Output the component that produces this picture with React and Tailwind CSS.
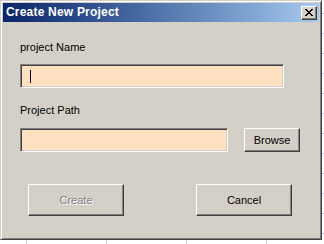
import React from 'react';

// classic 3D edges
const raised = 'border border-t-white border-l-white border-b-[#404040] border-r-[#404040] shadow-[inset_-1px_-1px_#808080]';
const sunken = 'border border-t-[#808080] border-l-[#808080] border-b-white border-r-white shadow-[inset_1px_1px_#404040,inset_-1px_-1px_#d4d0c8]';

const xRows = ['XX....XX', '.XX..XX.', '..XXXX..', '...XX...', '..XXXX..', '.XX..XX.', 'XX....XX'];

function CloseGlyph() {
  return (
    <svg width="8" height="7" viewBox="0 0 8 7" shapeRendering="crispEdges">
      {xRows.map((row, y) =>
        row.split('').map((c, x) =>
          c === 'X' ? <rect key={`${x}-${y}`} x={x} y={y} width="1" height="1" fill="#000" /> : null
        )
      )}
    </svg>
  );
}

function Button({ children, disabled, className = '' }) {
  return (
    <div className={`${raised} flex items-center justify-center bg-[#d4d0c8] ${className}`}>
      <span className={disabled ? 'text-[#808080] [text-shadow:1px_1px_#fff]' : 'text-black'}>{children}</span>
    </div>
  );
}

export default function App() {
  return (
    <div
      className="w-[324px] h-[244px] overflow-hidden bg-white bg-[linear-gradient(to_right,#c3cce6_1px,transparent_1px),linear-gradient(to_bottom,#c3cce6_1px,transparent_1px)] bg-size-[80px_20px] bg-position-[26px_13px] text-[11px] leading-[13px]"
      style={{ fontFamily: '"Liberation Sans", Arial, sans-serif' }}
    >
      <div className="w-[322px] h-[240px] flex flex-col p-[2px] bg-[#d4d0c8] border border-t-[#d4d0c8] border-l-[#d4d0c8] border-b-[#404040] border-r-[#404040] shadow-[inset_1px_1px_#fff,inset_-1px_-1px_#808080]">
        {/* Title bar */}
        <div className="h-[19px] flex items-center justify-between pl-[3px] pr-[2px] bg-linear-to-r from-[#0a246a] to-[#a6caf0]">
          <span className="text-white font-bold text-[12px] tracking-[0.2px]">Create New Project</span>
          <div className={`${raised} w-[16px] h-[14px] flex items-center justify-center bg-[#d4d0c8]`}>
            <CloseGlyph />
          </div>
        </div>

        {/* Body */}
        <div className="flex flex-col pl-[17px] pt-[19px]">
          <span className="text-black">project Name</span>
          <div className={`${sunken} mt-[10px] w-[264px] h-[24px] bg-[#ffe0c0] flex items-center pl-[9px]`}>
            <span className="w-px h-[13px] bg-[#000020]" />
          </div>

          <span className="mt-[16px] text-black">Project Path</span>
          <div className="mt-[11px] flex items-center gap-[16px]">
            <div className={`${sunken} w-[208px] h-[24px] bg-[#ffe0c0]`} />
            <Button className="w-[56px] h-[24px]">Browse</Button>
          </div>

          <div className="mt-[32px] pl-[8px] flex gap-[72px]">
            <Button disabled className="w-[96px] h-[32px]">Create</Button>
            <Button className="w-[96px] h-[32px]">Cancel</Button>
          </div>
        </div>
      </div>
    </div>
  );
}
